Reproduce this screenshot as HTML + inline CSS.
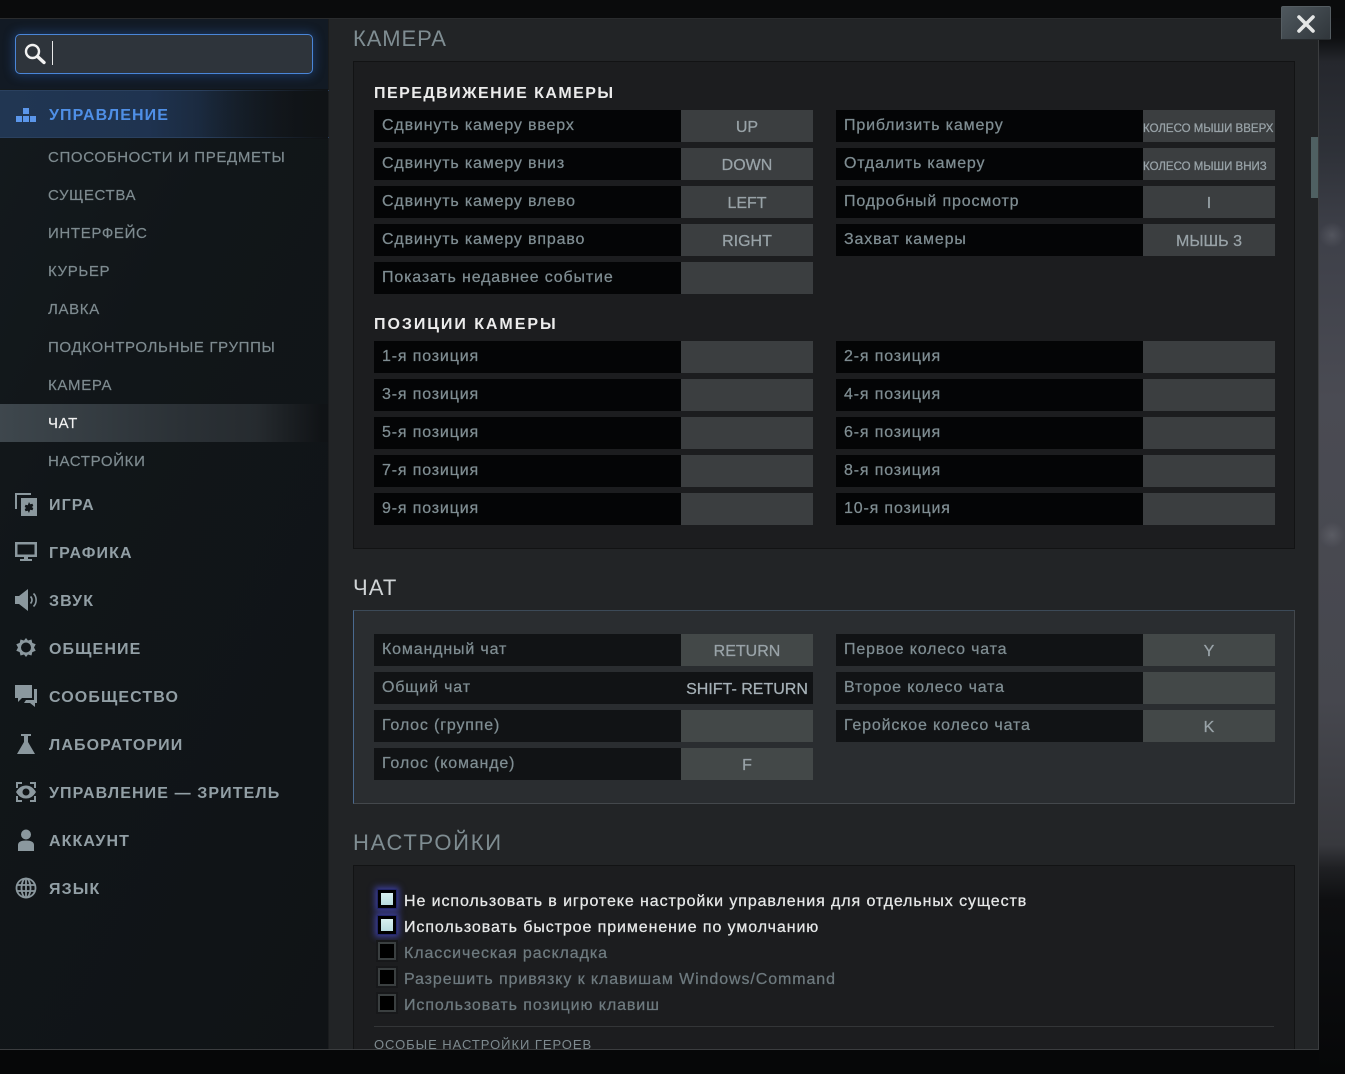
<!DOCTYPE html>
<html lang="ru"><head><meta charset="utf-8"><title>Настройки</title>
<style>
html,body{margin:0;padding:0;background:#060708}
body{width:1345px;height:1074px;position:relative;overflow:hidden;font-family:"Liberation Sans","DejaVu Sans",sans-serif}
div,span,svg{position:absolute;box-sizing:border-box;white-space:nowrap}
#bgr{left:1319px;top:0;width:26px;height:1074px;background:linear-gradient(180deg,#08090a 0,#0e0f11 38px,#25272d 62px,#2e3138 150px,#3e4049 235px,#4a4b53 400px,#46474e 700px,#38393e 845px,#1f2023 868px,#0e0f11 900px,#060708 1074px)}
#g1{left:1319px;top:222px;width:26px;height:26px;background:radial-gradient(ellipse at 50% 50%,rgba(120,122,130,.35),rgba(120,122,130,0) 70%)}
#g2{left:1319px;top:522px;width:26px;height:26px;background:radial-gradient(ellipse at 50% 50%,rgba(130,132,140,.3),rgba(130,132,140,0) 70%)}
#top{left:0;top:0;width:1345px;height:18px;background:#0a0b0c}
#panel{left:0;top:18px;width:1319px;height:1032px;background:#222426;border-right:1px solid #3b3d3f;border-bottom:1px solid #3b3d3f;border-top:1px solid #2a2c2e;overflow:hidden}
#side{left:0;top:0;width:329px;height:1032px;background:linear-gradient(115deg,#141a1e 0,#111619 35%,#101316 100%);border-right:1px solid #1a1c1e}
#hi1{left:0;top:71px;width:329px;height:48px;background:linear-gradient(90deg,#213652 0,#1f3350 45%,rgba(25,40,60,0) 95%);border-top:1px solid #2a405e;border-bottom:1px solid #2a405e}
#hi1fade{left:200px;top:70px;width:128px;height:50px;background:linear-gradient(90deg,rgba(16,19,22,0),#101316)}
#hi2{left:0;top:385px;width:328px;height:38px;background:linear-gradient(90deg,#3e474d 0,#2b3136 55%,#262b2f 78%,#101316 98%)}
#sglow{left:0;top:0;width:328px;height:70px;background:#121a24}
#search{left:15px;top:15px;width:298px;height:40px;background:#2e343b;border:1px solid #4a86d8;border-radius:5px;box-shadow:0 0 10px 2px rgba(50,110,200,.35)}
#caret{left:36px;top:6px;width:1px;height:24px;background:#e8e8e8}
.sub{left:48px;font-size:15px;line-height:20px;letter-spacing:.65px;color:#7e8b90;top:0;-webkit-text-stroke:.2px #7e8b90}
.main{left:49px;font-size:16px;font-weight:bold;line-height:22px;letter-spacing:1.1px;color:#929fa5}
.ic{left:15px;width:24px;height:24px;fill:#8b989e}
.t{left:353px;font-size:22px;line-height:26px;letter-spacing:1.7px;color:#7f8d92}
.box{left:353px;width:942px;background:#1c1d1f;border:1px solid #121314}
.h{left:374px;font-size:16px;font-weight:bold;line-height:20px;letter-spacing:1.45px;color:#ececec}
.l,.k{height:32px;font-size:16px}
.l{width:307px;background:#040506;color:#7f8d92;padding-left:8px;line-height:32px;letter-spacing:.84px;-webkit-text-stroke:.25px #7f8d92}
.k{width:132px;background:#3b3e40;color:#99a3a8;text-align:center;line-height:35px;letter-spacing:0;-webkit-text-stroke:.25px #99a3a8}
.a{left:374px}.ak{left:681px}.b{left:836px}.bk{left:1143px}
.c .l{background:#111315}.c .k{background:#434848}
.w{font-size:11.5px;text-align:left;letter-spacing:0;line-height:39px;overflow:hidden}
.cb{left:378px;width:18px;height:18px;background:#000;border:2px solid #3a3f40;box-shadow:0 0 0 2px #17181a}
.cb.on{border:3px solid #000;background:linear-gradient(180deg,#d8f0f0,#b9dce0);box-shadow:0 0 0 1px #23266a,0 0 6px 3px #3c3f9a}
.cl{left:404px;font-size:16px;line-height:20px;letter-spacing:.91px;color:#6e7a7f;-webkit-text-stroke:.25px #6e7a7f}
.cl.on{color:#e6e8e8;-webkit-text-stroke:.25px #e6e8e8}
#close{left:1281px;top:6px;width:50px;height:34px;border-radius:2px;background:linear-gradient(135deg,#4f585e,#30363b);border:1px solid #555d62;border-bottom-color:#262a2d}
#scroll{left:1311px;top:137px;width:7px;height:61px;background:#4f6062}
#bot{left:0;top:1050px;width:1319px;height:24px;background:#060708}
</style></head><body>
<div id="bgr"></div><div id="g1"></div><div id="g2"></div>
<div id="top"></div>
<div id="panel">
 <div id="side"></div>
 <div id="sglow"></div>
 <div id="hi1"></div><div id="hi1fade"></div>
 <div id="hi2"></div>
 <div id="search">
  <svg style="left:7px;top:7px;width:24px;height:24px" viewBox="0 0 24 24"><circle cx="9.500" cy="9.500" r="6.500" fill="none" stroke="#f2f2f2" stroke-width="2.400"/><path d="M14.500 14.500L21 20.500" stroke="#f2f2f2" stroke-width="3.400" stroke-linecap="round"/></svg>
  <div id="caret"></div>
 </div>
</div>

<svg class="ic" style="top:103px;fill:#5b96ea" viewBox="0 0 24 24"><path d="M1 13h6v6H1zM8 13h6v6H8zM15 13h6v6h-6zM8 5h6v6H8z"/></svg>
<div class="main" style="top:105px;color:#4f8fe6">УПРАВЛЕНИЕ</div>
<div class="sub" style="top:148px;left:48px">СПОСОБНОСТИ И ПРЕДМЕТЫ</div>
<div class="sub" style="top:186px">СУЩЕСТВА</div>
<div class="sub" style="top:224px">ИНТЕРФЕЙС</div>
<div class="sub" style="top:262px">КУРЬЕР</div>
<div class="sub" style="top:300px">ЛАВКА</div>
<div class="sub" style="top:338px">ПОДКОНТРОЛЬНЫЕ ГРУППЫ</div>
<div class="sub" style="top:376px">КАМЕРА</div>
<div class="sub" style="top:414px;color:#f0f0f0;-webkit-text-stroke:.2px #f0f0f0">ЧАТ</div>
<div class="sub" style="top:452px">НАСТРОЙКИ</div>

<svg class="ic" style="top:492px" viewBox="0 0 24 24"><path d="M0 1h16v2H2v14H0z"/><path fill-rule="evenodd" d="M6 6h16v18H6zM14 10l1.200 2.200 2.300-.4.8 2.200-1.600 1 1.600 1-.8 2.200-2.300-.4L14 21l-1.200-2.200-2.300.4-.8-2.200 1.600-1-1.600-1 .8-2.200 2.300.4z"/></svg>
<div class="main" style="top:495px">ИГРА</div>
<svg class="ic" style="top:540px" viewBox="0 0 24 24"><path fill-rule="evenodd" d="M0 2h22v15H0zM2.500 4.500v10h17v-10z"/><path d="M9 17h4v2H9zM5 19h12v2H5z"/></svg>
<div class="main" style="top:543px">ГРАФИКА</div>
<svg class="ic" style="top:588px" viewBox="0 0 24 24"><path d="M0 8h4l9-7v22l-9-7H0z"/><path d="M15.500 8.500c2 2 2 5 0 7M18.500 5.500c3.500 3.500 3.500 9.500 0 13" fill="none" stroke="#8b989e" stroke-width="1.600"/></svg>
<div class="main" style="top:591px">ЗВУК</div>
<svg class="ic" style="top:636px" viewBox="0 0 24 24"><path fill-rule="evenodd" d="M11 2l2 2.500 3.500-1 .8 3.400 3.400 1.300L19 11.500l1.700 3.300-3.400 1.300-.8 3.400-3.500-1L11 21l-2-2.500-3.500 1-.8-3.400-3.400-1.300L3 11.500 1.300 8.200l3.400-1.300.8-3.400 3.500 1zM11 6.500a5 5 0 100 10 5 5 0 000-10z"/></svg>
<div class="main" style="top:639px">ОБЩЕНИЕ</div>
<svg class="ic" style="top:684px" viewBox="0 0 24 24"><path d="M0 1h17v13H7l-4 4v-4H0z"/><path d="M19 5h3v14h-2v4l-5-4H9l2-3h8z"/></svg>
<div class="main" style="top:687px">СООБЩЕСТВО</div>
<svg class="ic" style="top:732px" viewBox="0 0 24 24"><path d="M6 2h10v2h-3v6l7 12H2L9 10V4H6z"/></svg>
<div class="main" style="top:735px">ЛАБОРАТОРИИ</div>
<svg class="ic" style="top:780px" viewBox="0 0 24 24"><path d="M2 8V3h5M15 3h5v5M2 16v5h5M15 21h5v-5" fill="none" stroke="#8b989e" stroke-width="2"/><path fill-rule="evenodd" d="M1 12c3-5 6.500-6.500 10-6.500S18 7 21 12c-3 5-6.500 6.500-10 6.500S4 17 1 12zM11 8.500a3.500 3.500 0 100 7 3.500 3.500 0 000-7z"/></svg>
<div class="main" style="top:783px">УПРАВЛЕНИЕ — ЗРИТЕЛЬ</div>
<svg class="ic" style="top:828px" viewBox="0 0 24 24"><circle cx="11" cy="6.500" r="5"/><path d="M3 23v-6c0-3 3-4.500 8-4.500s8 1.500 8 4.500v6z"/></svg>
<div class="main" style="top:831px">АККАУНТ</div>
<svg class="ic" style="top:876px" viewBox="0 0 24 24"><g fill="none" stroke="#8b989e" stroke-width="1.800"><circle cx="11" cy="12" r="9.500"/><ellipse cx="11" cy="12" rx="4.500" ry="9.500"/><path d="M11 2.500v19M2 9h18M2 15h18"/></g></svg>
<div class="main" style="top:879px">ЯЗЫК</div>

<div class="t" style="top:26px;letter-spacing:.9px">КАМЕРА</div>
<div class="box" style="top:61px;height:488px"></div>
<div class="h" style="top:84px">ПЕРЕДВИЖЕНИЕ КАМЕРЫ</div>

<div class="l a" style="top:110px">Сдвинуть камеру вверх</div><div class="k ak" style="top:110px">UP</div>
<div class="l a" style="top:148px">Сдвинуть камеру вниз</div><div class="k ak" style="top:148px">DOWN</div>
<div class="l a" style="top:186px">Сдвинуть камеру влево</div><div class="k ak" style="top:186px">LEFT</div>
<div class="l a" style="top:224px">Сдвинуть камеру вправо</div><div class="k ak" style="top:224px">RIGHT</div>
<div class="l a" style="top:262px">Показать недавнее событие</div><div class="k ak" style="top:262px"></div>
<div class="l b" style="top:110px">Приблизить камеру</div><div class="k bk w" style="top:110px">КОЛЕСО МЫШИ ВВЕРХ</div>
<div class="l b" style="top:148px">Отдалить камеру</div><div class="k bk w" style="top:148px">КОЛЕСО МЫШИ ВНИЗ</div>
<div class="l b" style="top:186px">Подробный просмотр</div><div class="k bk" style="top:186px">I</div>
<div class="l b" style="top:224px">Захват камеры</div><div class="k bk" style="top:224px">МЫШЬ 3</div>

<div class="h" style="top:315px;letter-spacing:1.95px">ПОЗИЦИИ КАМЕРЫ</div>
<div class="l a" style="top:341px">1-я позиция</div><div class="k ak" style="top:341px"></div>
<div class="l a" style="top:379px">3-я позиция</div><div class="k ak" style="top:379px"></div>
<div class="l a" style="top:417px">5-я позиция</div><div class="k ak" style="top:417px"></div>
<div class="l a" style="top:455px">7-я позиция</div><div class="k ak" style="top:455px"></div>
<div class="l a" style="top:493px">9-я позиция</div><div class="k ak" style="top:493px"></div>
<div class="l b" style="top:341px">2-я позиция</div><div class="k bk" style="top:341px"></div>
<div class="l b" style="top:379px">4-я позиция</div><div class="k bk" style="top:379px"></div>
<div class="l b" style="top:417px">6-я позиция</div><div class="k bk" style="top:417px"></div>
<div class="l b" style="top:455px">8-я позиция</div><div class="k bk" style="top:455px"></div>
<div class="l b" style="top:493px">10-я позиция</div><div class="k bk" style="top:493px"></div>

<div class="t" style="top:575px;color:#d0d4d6;letter-spacing:1.1px">ЧАТ</div>
<div class="box" style="top:610px;height:194px;background:#2a2d30;border:1px solid #44484c;border-left-color:#4a6a90;border-top-color:#3c4a58"></div>
<div class="c">
<div class="l a" style="top:634px">Командный чат</div><div class="k ak" style="top:634px">RETURN</div>
<div class="l a" style="top:672px">Общий чат</div><div class="k ak" style="top:672px;background:#111315;color:#a6b1b7;-webkit-text-stroke:.25px #a6b1b7">SHIFT- RETURN</div>
<div class="l a" style="top:710px">Голос (группе)</div><div class="k ak" style="top:710px"></div>
<div class="l a" style="top:748px">Голос (команде)</div><div class="k ak" style="top:748px">F</div>
<div class="l b" style="top:634px">Первое колесо чата</div><div class="k bk" style="top:634px">Y</div>
<div class="l b" style="top:672px">Второе колесо чата</div><div class="k bk" style="top:672px"></div>
<div class="l b" style="top:710px">Геройское колесо чата</div><div class="k bk" style="top:710px">K</div>
</div>

<div class="t" style="top:830px">НАСТРОЙКИ</div>
<div class="box" style="top:865px;height:184px;border-bottom:0"></div>
<div class="cb on" style="top:890px"></div><div class="cl on" style="top:892px">Не использовать в игротеке настройки управления для отдельных существ</div>
<div class="cb on" style="top:916px"></div><div class="cl on" style="top:918px">Использовать быстрое применение по умолчанию</div>
<div class="cb" style="top:942px"></div><div class="cl" style="top:944px">Классическая раскладка</div>
<div class="cb" style="top:968px"></div><div class="cl" style="top:970px">Разрешить привязку к клавишам Windows/Command</div>
<div class="cb" style="top:994px"></div><div class="cl" style="top:996px">Использовать позицию клавиш</div>
<div style="left:374px;top:1026px;width:900px;height:1px;background:#333537"></div>
<div style="left:374px;top:1036px;width:400px;height:13px;overflow:hidden"><div style="left:0;top:0;font-size:13px;line-height:18px;letter-spacing:.95px;color:#7e8a8f">ОСОБЫЕ НАСТРОЙКИ ГЕРОЕВ</div></div>

<div id="scroll"></div>
<div id="bot"></div>
<div id="close"><svg style="left:14px;top:7px;width:20px;height:20px" viewBox="0 0 20 20"><path d="M3 3L17 17M17 3L3 17" stroke="#e4e6e6" stroke-width="3.600" stroke-linecap="round"/></svg></div>
</body></html>
